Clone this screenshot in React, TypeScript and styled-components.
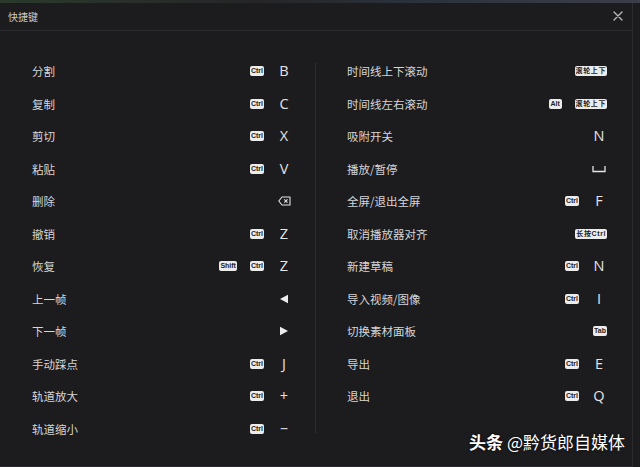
import React from "react";
import styled, { createGlobalStyle } from "styled-components";

const GlobalStyle = createGlobalStyle`
	html, body {
		margin: 0;
		padding: 0;
		background: #1c1b1e;
	}
	* {
		box-sizing: border-box;
	}
`;

const CJK = `"Noto Sans CJK SC", "Noto Sans", sans-serif`;

const StyledPage = styled.div`
	position: relative;
	width: 640px;
	height: 467px;
	overflow: hidden;
	background: #1c1b1e;
	font-family: ${CJK};

	.topStrip {
		height: 3px;
		background: linear-gradient(90deg, #2b3a2c 0%, #252527 40%, #2a3037 60%, #3a3f47 100%);
	}
`;

const Dialog = styled.div`
	width: 633px;
	height: 464px;
	border-right: 1px solid #2c2b2f;
	border-bottom: 1px solid #2c2b2f;
	display: flex;
	flex-direction: column;
`;

const Header = styled.div`
	height: 28px;
	border-bottom: 1px solid #2a292c;
	display: flex;
	align-items: center;
	justify-content: space-between;
	padding: 0 4px 0 8px;

	h2 {
		margin: 0;
		font-size: 10px;
		font-weight: 400;
		color: #c9c9cb;
	}
`;

const CloseButton = styled.button`
	width: 20px;
	height: 20px;
	border: none;
	background: none;
	padding: 0;
	display: flex;
	align-items: center;
	justify-content: center;
	margin-top: -2px;
`;

const Body = styled.div`
	display: flex;
	padding: 24px 0 0 32px;
`;

const Column = styled.div`
	width: 260px;
	display: flex;
	flex-direction: column;
`;

const Divider = styled.div`
	width: 1px;
	background: #2d2c30;
	margin: 8px 31px 12px 23px;
	align-self: stretch;
`;

const Row = styled.div`
	height: 32.5px;
	display: flex;
	align-items: center;
	justify-content: space-between;
`;

const Label = styled.span`
	font-size: 11.5px;
	color: #d6d6d8;
	white-space: nowrap;
`;

const Keys = styled.div`
	display: flex;
	align-items: center;
	gap: 13px;
`;

const Badge = styled.span<{ $cjk?: boolean }>`
	height: 10px;
	min-width: 13px;
	padding: 0 1px;
	border-radius: 2px;
	background: #ececec;
	color: #1d1d1f;
	font-family: "Liberation Sans", ${CJK};
	font-size: 7px;
	font-weight: 700;
	line-height: 10px;
	letter-spacing: ${({ $cjk }) => ($cjk ? "0.6px" : "0")};
	text-align: center;
	white-space: nowrap;
`;

const Key = styled.span`
	width: 16px;
	margin-left: -1px;
	display: flex;
	align-items: center;
	justify-content: center;
	color: #e4e4e6;
	font-family: "Open Sans", "Noto Sans", sans-serif;
	font-size: 14.5px;
	line-height: 16px;
`;

const Watermark = styled.div`
	position: absolute;
	right: 15px;
	bottom: 13px;
	color: #ffffff;
	font-family: ${CJK};
	font-size: 17px;
	text-shadow: 0 0 3px rgba(0, 0, 0, 0.8);
	white-space: nowrap;

	b {
		font-weight: 700;
		margin-right: 4px;
	}
`;

const CloseIcon = () => (
	<svg width="10" height="10" viewBox="0 0 10 10">
		<path d="M1 1L9 9M9 1L1 9" stroke="#b8b8ba" strokeWidth="1.4" strokeLinecap="round" />
	</svg>
);

const BackspaceIcon = () => (
	<svg width="13" height="10" viewBox="0 0 13 10">
		<path d="M4 1H12V9H4L0.8 5Z" fill="none" stroke="#e4e4e6" strokeWidth="1.1" strokeLinejoin="round" />
		<path d="M6.3 3.3L9.5 6.7M9.5 3.3L6.3 6.7" stroke="#e4e4e6" strokeWidth="1.1" />
	</svg>
);

const TriangleLeft = () => (
	<svg width="10" height="10" viewBox="0 0 10 10">
		<path d="M1 5L9 0.8V9.2Z" fill="#ececee" />
	</svg>
);

const TriangleRight = () => (
	<svg width="10" height="10" viewBox="0 0 10 10">
		<path d="M9 5L1 0.8V9.2Z" fill="#ececee" />
	</svg>
);

const SpaceIcon = () => (
	<svg width="14" height="8" viewBox="0 0 14 8">
		<path d="M1 1V6.5H13V1" fill="none" stroke="#e4e4e6" strokeWidth="1.3" />
	</svg>
);

type Shortcut = {
	label: string;
	badges?: string[];
	keyCap?: React.ReactNode;
};

const leftItems: Shortcut[] = [
	{ label: "分割", badges: ["Ctrl"], keyCap: "B" },
	{ label: "复制", badges: ["Ctrl"], keyCap: "C" },
	{ label: "剪切", badges: ["Ctrl"], keyCap: "X" },
	{ label: "粘贴", badges: ["Ctrl"], keyCap: "V" },
	{ label: "删除", keyCap: <BackspaceIcon /> },
	{ label: "撤销", badges: ["Ctrl"], keyCap: "Z" },
	{ label: "恢复", badges: ["Shift", "Ctrl"], keyCap: "Z" },
	{ label: "上一帧", keyCap: <TriangleLeft /> },
	{ label: "下一帧", keyCap: <TriangleRight /> },
	{ label: "手动踩点", badges: ["Ctrl"], keyCap: "J" },
	{ label: "轨道放大", badges: ["Ctrl"], keyCap: "+" },
	{ label: "轨道缩小", badges: ["Ctrl"], keyCap: "−" },
];

const rightItems: Shortcut[] = [
	{ label: "时间线上下滚动", badges: ["滚轮上下"] },
	{ label: "时间线左右滚动", badges: ["Alt", "滚轮上下"] },
	{ label: "吸附开关", keyCap: "N" },
	{ label: "播放/暂停", keyCap: <SpaceIcon /> },
	{ label: "全屏/退出全屏", badges: ["Ctrl"], keyCap: "F" },
	{ label: "取消播放器对齐", badges: ["长按Ctrl"] },
	{ label: "新建草稿", badges: ["Ctrl"], keyCap: "N" },
	{ label: "导入视频/图像", badges: ["Ctrl"], keyCap: "I" },
	{ label: "切换素材面板", badges: ["Tab"] },
	{ label: "导出", badges: ["Ctrl"], keyCap: "E" },
	{ label: "退出", badges: ["Ctrl"], keyCap: "Q" },
];

const ShortcutRow: React.FC<Shortcut> = ({ label, badges = [], keyCap }) => (
	<Row>
		<Label>{label}</Label>
		<Keys>
			{badges.map((b) => (
				<Badge key={b} $cjk={/[^\x00-\x7f]/.test(b)}>{b}</Badge>
			))}
			{keyCap !== undefined && <Key>{keyCap}</Key>}
		</Keys>
	</Row>
);

export default function App() {
	return (
		<StyledPage>
			<GlobalStyle />
			<div className="topStrip" />
			<Dialog>
				<Header>
					<h2>快捷键</h2>
					<CloseButton>
						<CloseIcon />
					</CloseButton>
				</Header>
				<Body>
					<Column>
						{leftItems.map((item) => (
							<ShortcutRow key={item.label} {...item} />
						))}
					</Column>
					<Divider />
					<Column>
						{rightItems.map((item) => (
							<ShortcutRow key={item.label} {...item} />
						))}
					</Column>
				</Body>
			</Dialog>
			<Watermark>
				<b>头条</b>@黔货郎自媒体
			</Watermark>
		</StyledPage>
	);
}
